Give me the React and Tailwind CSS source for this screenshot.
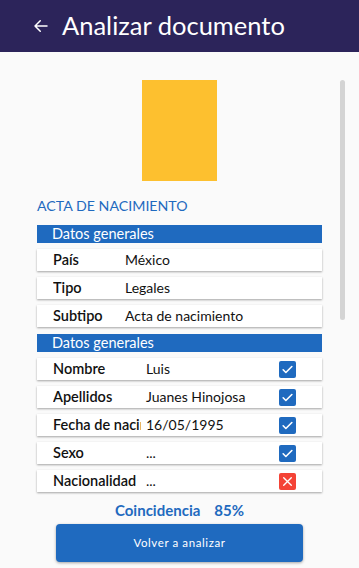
import React from "react";

const font = { fontFamily: "Lato, 'Noto Sans', sans-serif" };

function Row({ label, value, labelW, innerW, status }) {
  return (
    <div className="flex h-[22px] items-center bg-white shadow-[0_1px_2px_rgba(0,0,0,0.35)]">
      <div className={`${labelW} shrink-0 pl-[16px]`}>
        <div className={`${innerW} overflow-hidden whitespace-nowrap text-[14.5px] font-semibold leading-[20px] text-[#111]`}>{label}</div>
      </div>
      <div className="flex-1 whitespace-nowrap text-[14px] leading-[20px] text-[#111]">{value}</div>
      {status === "ok" && (
        <div className="mr-[26px] flex h-[17px] w-[17px] items-center justify-center rounded-[2px] bg-[#1f6abf]">
          <svg width="13" height="13" viewBox="0 0 24 24" fill="none" stroke="white" strokeWidth="3" strokeLinecap="round" strokeLinejoin="round">
            <path d="M4 12.5l5 5L20 6.5" />
          </svg>
        </div>
      )}
      {status === "bad" && (
        <div className="mr-[26px] flex h-[17px] w-[17px] items-center justify-center rounded-[2px] bg-[#f44336]">
          <svg width="13" height="13" viewBox="0 0 24 24" fill="none" stroke="white" strokeWidth="2.5" strokeLinecap="round">
            <path d="M5 5l14 14M19 5L5 19" />
          </svg>
        </div>
      )}
    </div>
  );
}

function Header({ children }) {
  return (
    <div className="flex h-[18px] items-center bg-[#1f6abf] pl-[15px] text-[14.5px] leading-[18px] text-white">{children}</div>
  );
}

export default function App() {
  return (
    <div className="relative h-[568px] w-[359px] overflow-hidden bg-[#fafafa]" style={font}>
      <div className="flex h-[52px] items-center bg-[#2c245a] pl-[32px] text-white">
        <svg width="18" height="18" viewBox="0 0 24 24" fill="none" stroke="white" strokeWidth="2" strokeLinecap="round" strokeLinejoin="round">
          <path d="M20 12H4M11 5l-7 7 7 7" />
        </svg>
        <span className="ml-[12px] text-[25.5px] leading-none">Analizar documento</span>
      </div>
      <div className="absolute right-[14px] top-[80px] h-[240px] w-[5px] rounded-full bg-[#d4d4d4]" />
      <div className="mx-[37px] flex flex-col">
        <div className="mt-[28px] flex justify-center">
          <div className="h-[101px] w-[75px] bg-[#fdc02f]" />
        </div>
        <div className="mt-[16px] text-[14.2px] leading-[18px] text-[#1f6abf]">ACTA DE NACIMIENTO</div>
        <div className="mt-[10px]">
          <Header>Datos generales</Header>
        </div>
        <div className="mt-[6px] flex flex-col gap-[6px]">
          <Row label="País" value="México" labelW="w-[88px]" innerW="w-[70px]" />
          <Row label="Tipo" value="Legales" labelW="w-[88px]" innerW="w-[70px]" />
          <Row label="Subtipo" value="Acta de nacimiento" labelW="w-[88px]" innerW="w-[70px]" />
        </div>
        <div className="mt-[7px]">
          <Header>Datos generales</Header>
        </div>
        <div className="mt-[6px] flex flex-col gap-[6px]">
          <Row label="Nombre" value="Luis" labelW="w-[109px]" innerW="w-[88px]" status="ok" />
          <Row label="Apellidos" value="Juanes Hinojosa" labelW="w-[109px]" innerW="w-[88px]" status="ok" />
          <Row label="Fecha de nacimiento" value="16/05/1995" labelW="w-[109px]" innerW="w-[88px]" status="ok" />
          <Row label="Sexo" value="..." labelW="w-[109px]" innerW="w-[88px]" status="ok" />
          <Row label="Nacionalidad" value="..." labelW="w-[109px]" innerW="w-[88px]" status="bad" />
        </div>
        <div className="mt-[8px] flex justify-center gap-[14px] text-[15px] font-bold leading-[20px] text-[#1f6abf]">
          <span>Coincidencia</span>
          <span>85%</span>
        </div>
        <div className="mx-[19px] mt-[4px] flex h-[38px] items-center justify-center rounded-[4px] bg-[#1f6abf] text-[11.5px] tracking-[0.6px] text-white shadow-[0_1px_3px_rgba(0,0,0,0.35)]">
          Volver a analizar
        </div>
      </div>
    </div>
  );
}
